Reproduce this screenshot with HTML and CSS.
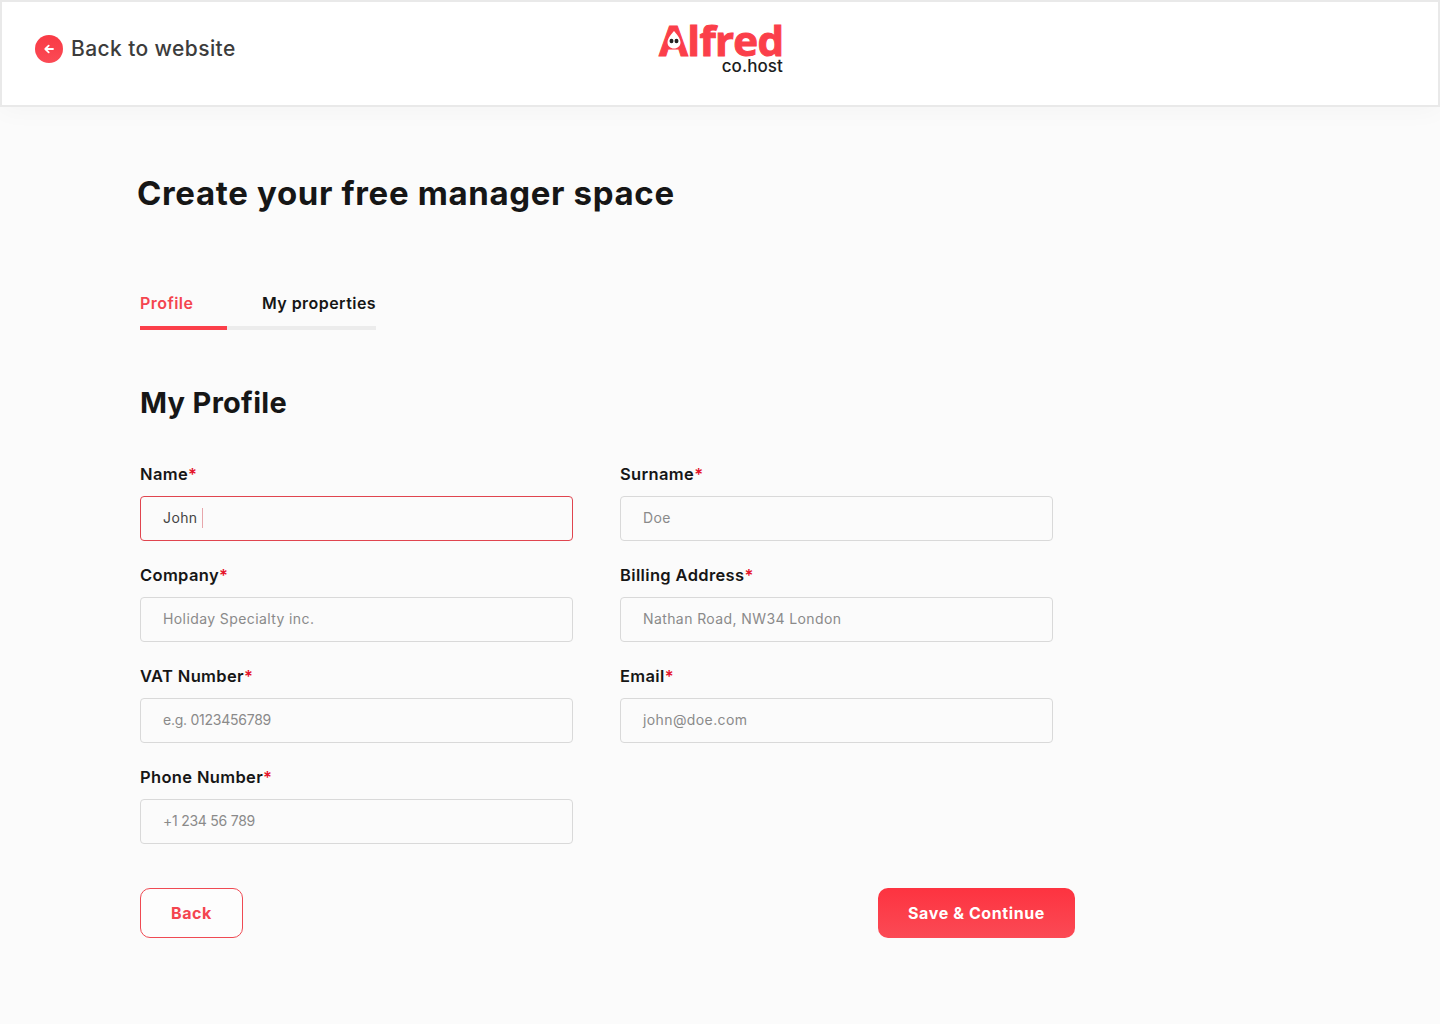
FILE: index.html
```html
<!DOCTYPE html>
<html>
<head lang="en">
    <meta charset="UTF-8">
    <title>Create your free manager space</title>
    <link rel="stylesheet" href="styles.css">
</head>
<body>

<div class="header">
    <a class="back-link">
        <span class="back-icon">
            <svg width="12" height="12" viewBox="0 0 12 12" fill="none" stroke="#fff" stroke-width="1.8" stroke-linecap="round" stroke-linejoin="round">
                <path d="M10 6H2.5M5.7 2.6 2.3 6l3.4 3.4"/>
            </svg>
        </span>
        Back to website
    </a>
    <div class="logo">
        <div class="logo-name">
            Alfred
            <svg class="logo-ghost" width="14" height="18" viewBox="0 0 14 18">
                <path d="M7 0C9 2.500 13.500 7 13.500 11.500 13.500 15 10.500 17.500 7 17.500 3.500 17.500.5 15 .5 11.500.5 7 5 2.500 7 0Z" fill="#fff"/>
                <ellipse cx="4.500" cy="10" rx="2" ry="2.300" fill="#222"/>
                <ellipse cx="9.500" cy="10" rx="2" ry="2.300" fill="#222"/>
            </svg>
        </div>
        <div class="logo-sub">co.host</div>
    </div>
    <div></div>
</div>

<div class="main">
    <h1>Create your free manager space</h1>

    <div class="tabs">
        <div class="tab current">Profile</div>
        <div class="tab">My properties</div>
    </div>

    <h2>My Profile</h2>

    <div class="form">
        <div class="field">
            <label>Name<i>*</i></label>
            <div class="input active">John<span class="caret"></span></div>
        </div>
        <div class="field">
            <label>Surname<i>*</i></label>
            <div class="input">Doe</div>
        </div>
        <div class="field">
            <label>Company<i>*</i></label>
            <div class="input">Holiday Specialty inc.</div>
        </div>
        <div class="field">
            <label>Billing Address<i>*</i></label>
            <div class="input">Nathan Road, NW34 London</div>
        </div>
        <div class="field">
            <label>VAT Number<i>*</i></label>
            <div class="input num">e.g. 0123456789</div>
        </div>
        <div class="field">
            <label>Email<i>*</i></label>
            <div class="input">john@doe.com</div>
        </div>
        <div class="field">
            <label>Phone Number<i>*</i></label>
            <div class="input num">+1 234 56 789</div>
        </div>
    </div>

    <div class="actions">
        <button class="btn btn-back">Back</button>
        <button class="btn btn-save">Save &amp; Continue</button>
    </div>
</div>

</body>
</html>
```

FILE: styles.css
```css
* {
    padding: 0;
    margin: 0;
    box-sizing: border-box;
}
body {
    background-color: #fbfbfb;
    font-family: Inter, "Open Sans", sans-serif;
    color: #161616;
    height: 1024px;
    overflow: hidden;
}
.header {
    height: 107px;
    background-color: #fff;
    border: 2px solid #e9e9e9;
    box-shadow: 0 4px 24px rgba(0, 0, 0, .03);
    display: grid;
    grid-template-columns: 1fr auto 1fr;
    align-items: center;
    padding-bottom: 8px;
}
.back-link {
    display: flex;
    align-items: center;
    gap: 8px;
    margin: 0 0 2px 33px;
    font-size: 21px;
    font-weight: 500;
    letter-spacing: .4px;
    color: #3c3c3c;
}
.back-icon {
    width: 28px;
    height: 28px;
    border-radius: 50%;
    background: linear-gradient(180deg, #f93a45, #fb4a55);
    display: flex;
    align-items: center;
    justify-content: center;
}
.logo {
    width: 126px;
    margin-bottom: 4px;
    text-align: right;
}
.logo-name {
    position: relative;
    padding-left: 2px;
    font-family: "Open Sans", sans-serif;
    font-size: 42px;
    font-weight: 700;
    line-height: 36px;
    letter-spacing: -.7px;
    color: #fb3f4a;
    -webkit-text-stroke: 1px #fb3f4a;
    text-align: left;
}
.logo-ghost {
    position: absolute;
    left: 10px;
    top: 9px;
}
.logo-sub {
    font-size: 17px;
    font-weight: 500;
    line-height: 16px;
    letter-spacing: .1px;
    color: #1d1d1d;
}
.main {
    padding: 65px 0 0 140px;
}
h1 {
    font-size: 33px;
    line-height: 42px;
    font-weight: 700;
    letter-spacing: .65px;
    margin-left: -3px;
}
.tabs {
    display: flex;
    width: 236px;
    margin-top: 78px;
    border-bottom: 4px solid #ececec;
}
.tab {
    font-size: 16px;
    font-weight: 600;
    line-height: 22px;
    letter-spacing: .45px;
    padding: 0 0 12px 35px;
    margin-bottom: -4px;
    white-space: nowrap;
    flex: 1;
}
.tab.current {
    flex: 0 0 87px;
    padding-left: 0;
    color: #f4454f;
    border-bottom: 4px solid #fb3f4a;
}
h2 {
    font-size: 29px;
    line-height: 38px;
    font-weight: 700;
    letter-spacing: .3px;
    margin-top: 54px;
}
.form {
    display: grid;
    grid-template-columns: 433px 433px;
    column-gap: 47px;
    row-gap: 23px;
    margin-top: 41px;
}
.field label {
    display: block;
    font-size: 16.5px;
    font-weight: 600;
    line-height: 22px;
    letter-spacing: .35px;
    margin-bottom: 11px;
}
.field label i {
    font-style: normal;
    color: #e5132b;
}
.input {
    height: 45px;
    line-height: 41px;
    padding-left: 22px;
    font-size: 14px;
    letter-spacing: .4px;
    color: #8a8a8a;
    border: 1px solid #d9d9d9;
    border-radius: 4px;
}
.input.num {
    letter-spacing: -.25px;
}
.input.active {
    color: #444;
    border-color: #e0454f;
}
.caret {
    display: inline-block;
    width: 1px;
    height: 20px;
    margin-left: 4px;
    vertical-align: -5px;
    background-color: #e7a6ab;
}
.actions {
    display: flex;
    justify-content: space-between;
    width: 935px;
    margin-top: 44px;
}
.btn {
    height: 50px;
    border-radius: 10px;
    font-family: inherit;
    font-size: 16px;
    font-weight: 700;
    letter-spacing: .6px;
}
.btn-back {
    width: 103px;
    color: #f4454f;
    background-color: #fdfdfd;
    border: 1px solid #ef4a53;
}
.btn-save {
    width: 197px;
    color: #fff;
    border: 0;
    background: linear-gradient(180deg, #fd3340, #fb4a55);
}
```
